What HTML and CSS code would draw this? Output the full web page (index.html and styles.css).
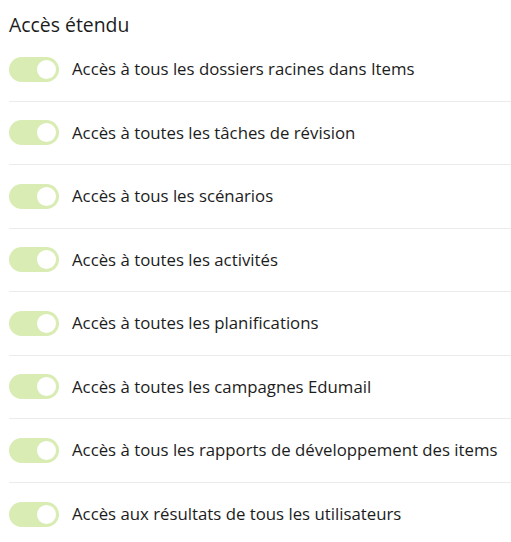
FILE: index.html
```html
<!DOCTYPE html>
<html lang="fr">
<head>
<meta charset="utf-8">
<link rel="stylesheet" href="styles.css">
</head>
<body>
<section class="panel">
  <h2 class="title">Accès étendu</h2>
  <ul class="list">
    <li class="row"><span class="toggle"><span class="knob"></span></span><span class="label">Accès à tous les dossiers racines dans Items</span></li>
    <li class="row"><span class="toggle"><span class="knob"></span></span><span class="label">Accès à toutes les tâches de révision</span></li>
    <li class="row"><span class="toggle"><span class="knob"></span></span><span class="label">Accès à tous les scénarios</span></li>
    <li class="row"><span class="toggle"><span class="knob"></span></span><span class="label">Accès à toutes les activités</span></li>
    <li class="row"><span class="toggle"><span class="knob"></span></span><span class="label">Accès à toutes les planifications</span></li>
    <li class="row"><span class="toggle"><span class="knob"></span></span><span class="label">Accès à toutes les campagnes Edumail</span></li>
    <li class="row"><span class="toggle"><span class="knob"></span></span><span class="label">Accès à tous les rapports de développement des items</span></li>
    <li class="row"><span class="toggle"><span class="knob"></span></span><span class="label">Accès aux résultats de tous les utilisateurs</span></li>
  </ul>
</section>
</body>
</html>
```
FILE: styles.css
```css
html, body {
  margin: 0;
  padding: 0;
  background: #ffffff;
}
body {
  font-family: "Open Sans", "Noto Sans", sans-serif;
  color: #1c1c1c;
}
.panel {
  padding: 12px 0 0 9px;
}
.title {
  margin: 0;
  font-size: 19.4px;
  font-weight: 500;
  line-height: 26px;
  color: #1c1c1c;
}
.list {
  list-style: none;
  margin: 0;
  padding: 0;
}
.row {
  display: flex;
  align-items: center;
  gap: 13px;
  height: 63.5px;
  box-sizing: border-box;
  border-bottom: 1px solid #ebebeb;
}
.row:last-child {
  border-bottom: none;
}
.toggle {
  flex: none;
  position: relative;
  width: 50px;
  height: 25px;
  border-radius: 13px;
  background: #d9ecb3;
}
.knob {
  position: absolute;
  right: 1px;
  top: 1px;
  width: 19px;
  height: 19px;
  border-radius: 50%;
  background: #ffffff;
  border: 2px solid #d9ecb3;
  box-sizing: content-box;
}
.label {
  font-size: 16.8px;
  font-weight: 530;
  line-height: 22px;
}
```
